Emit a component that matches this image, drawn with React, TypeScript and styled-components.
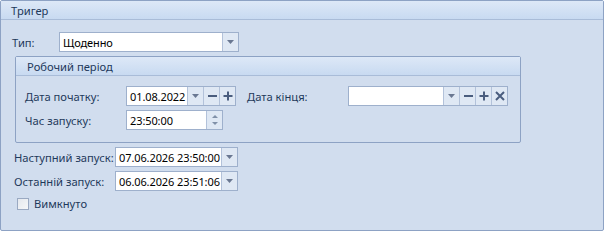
import React from "react";
import styled, { createGlobalStyle } from "styled-components";

const GlobalStyle = createGlobalStyle`
  * { box-sizing: border-box; }
  body {
    margin: 0;
    font-family: "Noto Sans", "Open Sans", sans-serif;
    font-size: 11px;
    background: #ffffff;
  }
`;

const Panel = styled.div`
  width: 604px;
  height: 231px;
  border: 1px solid #8da2c4;
  border-radius: 2px;
  background: #d1ddee;
  display: flex;
  flex-direction: column;
`;

const Header = styled.div<{ $inner?: boolean }>`
  height: 19px;
  flex: none;
  display: flex;
  align-items: center;
  padding-left: ${(p) => (p.$inner ? "11px" : "10px")};
  background: linear-gradient(to bottom, #dde8f7, #c8daf1);
  border-bottom: 1px solid #a9bcd8;
  color: #1e395b;
  font-size: 11.2px;
`;

const Body = styled.div`
  padding: 12px 0 0 11px;
  display: flex;
  flex-direction: column;
`;

const Row = styled.div<{ $top?: number; $left?: number }>`
  display: flex;
  align-items: center;
  height: 20px;
  margin-top: ${(p) => p.$top ?? 0}px;
  margin-left: ${(p) => p.$left ?? 0}px;
`;

const Label = styled.span<{ $w: number; $gap?: number }>`
  width: ${(p) => p.$w}px;
  margin-left: ${(p) => p.$gap ?? 0}px;
  flex: none;
  color: #1e395b;
  font-size: 11.2px;
  white-space: nowrap;
`;

const Field = styled.div<{ $w: number }>`
  width: ${(p) => p.$w}px;
  height: 20px;
  flex: none;
  display: flex;
  border: 1px solid #9eb0cc;
  background: #ffffff;
`;

const FieldText = styled.div`
  flex: 1;
  display: flex;
  align-items: center;
  padding-left: 3px;
  color: #000000;
  font-size: 11px;
  letter-spacing: -0.1px;
  white-space: nowrap;
  overflow: hidden;
`;

const Btn = styled.div`
  width: 16px;
  flex: none;
  display: flex;
  align-items: center;
  justify-content: center;
  border-left: 1px solid #b3c2da;
  background: #dfe8f4;
  color: #4a5d7e;
`;

const Group = styled.div`
  width: 506px;
  height: 87px;
  margin: 4px 0 0 3px;
  border: 1px solid #8da2c4;
  border-radius: 2px;
  display: flex;
  flex-direction: column;
`;

const GroupBody = styled.div`
  padding: 10px 0 0 9px;
  display: flex;
  flex-direction: column;
`;

const CheckRow = styled.label`
  display: flex;
  align-items: center;
  gap: 5px;
  margin: 5px 0 0 5px;
  color: #1e395b;
  font-size: 11.2px;
`;

const Box = styled.span`
  width: 12px;
  height: 12px;
  border: 1px solid #9aa9c2;
  background: linear-gradient(to bottom right, #e4e8ee, #f6f7f9);
`;

const Arrow = () => (
  <svg width="8" height="4" viewBox="0 0 8 4">
    <path d="M0 0h7L3.5 4z" fill="#6a7892" />
  </svg>
);

const Minus = () => (
  <svg width="10" height="10" viewBox="0 0 10 10">
    <rect x="1" y="4" width="9" height="2" fill="#4a5d7e" />
  </svg>
);

const Plus = () => (
  <svg width="10" height="10" viewBox="0 0 10 10">
    <rect x="0.5" y="4" width="9" height="2" fill="#4a5d7e" />
    <rect x="4" y="0.5" width="2" height="9" fill="#4a5d7e" />
  </svg>
);

const Cross = () => (
  <svg width="10" height="10" viewBox="0 0 10 10">
    <path d="M1 1L9 9M9 1L1 9" stroke="#4a5d7e" strokeWidth="2" />
  </svg>
);

const Spin = () => (
  <svg width="6" height="12" viewBox="0 0 6 12">
    <path d="M0 4h6L3 1z" fill="#8090a8" />
    <path d="M0 8h6L3 11z" fill="#8090a8" />
  </svg>
);

export default function App() {
  return (
    <>
      <GlobalStyle />
      <Panel>
        <Header>Тригер</Header>
        <Body>
          <Row>
            <Label $w={47}>Тип:</Label>
            <Field $w={180}>
              <FieldText>Щоденно</FieldText>
              <Btn>
                <Arrow />
              </Btn>
            </Field>
          </Row>
          <Group>
            <Header $inner>Робочий період</Header>
            <GroupBody>
              <Row>
                <Label $w={101}>Дата початку:</Label>
                <Field $w={110}>
                  <FieldText>01.08.2022</FieldText>
                  <Btn>
                    <Arrow />
                  </Btn>
                  <Btn>
                    <Minus />
                  </Btn>
                  <Btn>
                    <Plus />
                  </Btn>
                </Field>
                <Label $w={101} $gap={11}>
                  Дата кінця:
                </Label>
                <Field $w={160}>
                  <FieldText />
                  <Btn>
                    <Arrow />
                  </Btn>
                  <Btn>
                    <Minus />
                  </Btn>
                  <Btn>
                    <Plus />
                  </Btn>
                  <Btn>
                    <Cross />
                  </Btn>
                </Field>
              </Row>
              <Row $top={4}>
                <Label $w={101}>Час запуску:</Label>
                <Field $w={97}>
                  <FieldText>23:50:00</FieldText>
                  <Btn>
                    <Spin />
                  </Btn>
                </Field>
              </Row>
            </GroupBody>
          </Group>
          <Row $top={4} $left={2}>
            <Label $w={101}>Наступний запуск:</Label>
            <Field $w={123}>
              <FieldText>07.06.2026 23:50:00</FieldText>
              <Btn>
                <Arrow />
              </Btn>
            </Field>
          </Row>
          <Row $top={4} $left={2}>
            <Label $w={101}>Останній запуск:</Label>
            <Field $w={123}>
              <FieldText>06.06.2026 23:51:06</FieldText>
              <Btn>
                <Arrow />
              </Btn>
            </Field>
          </Row>
          <CheckRow>
            <Box />
            Вимкнуто
          </CheckRow>
        </Body>
      </Panel>
    </>
  );
}
